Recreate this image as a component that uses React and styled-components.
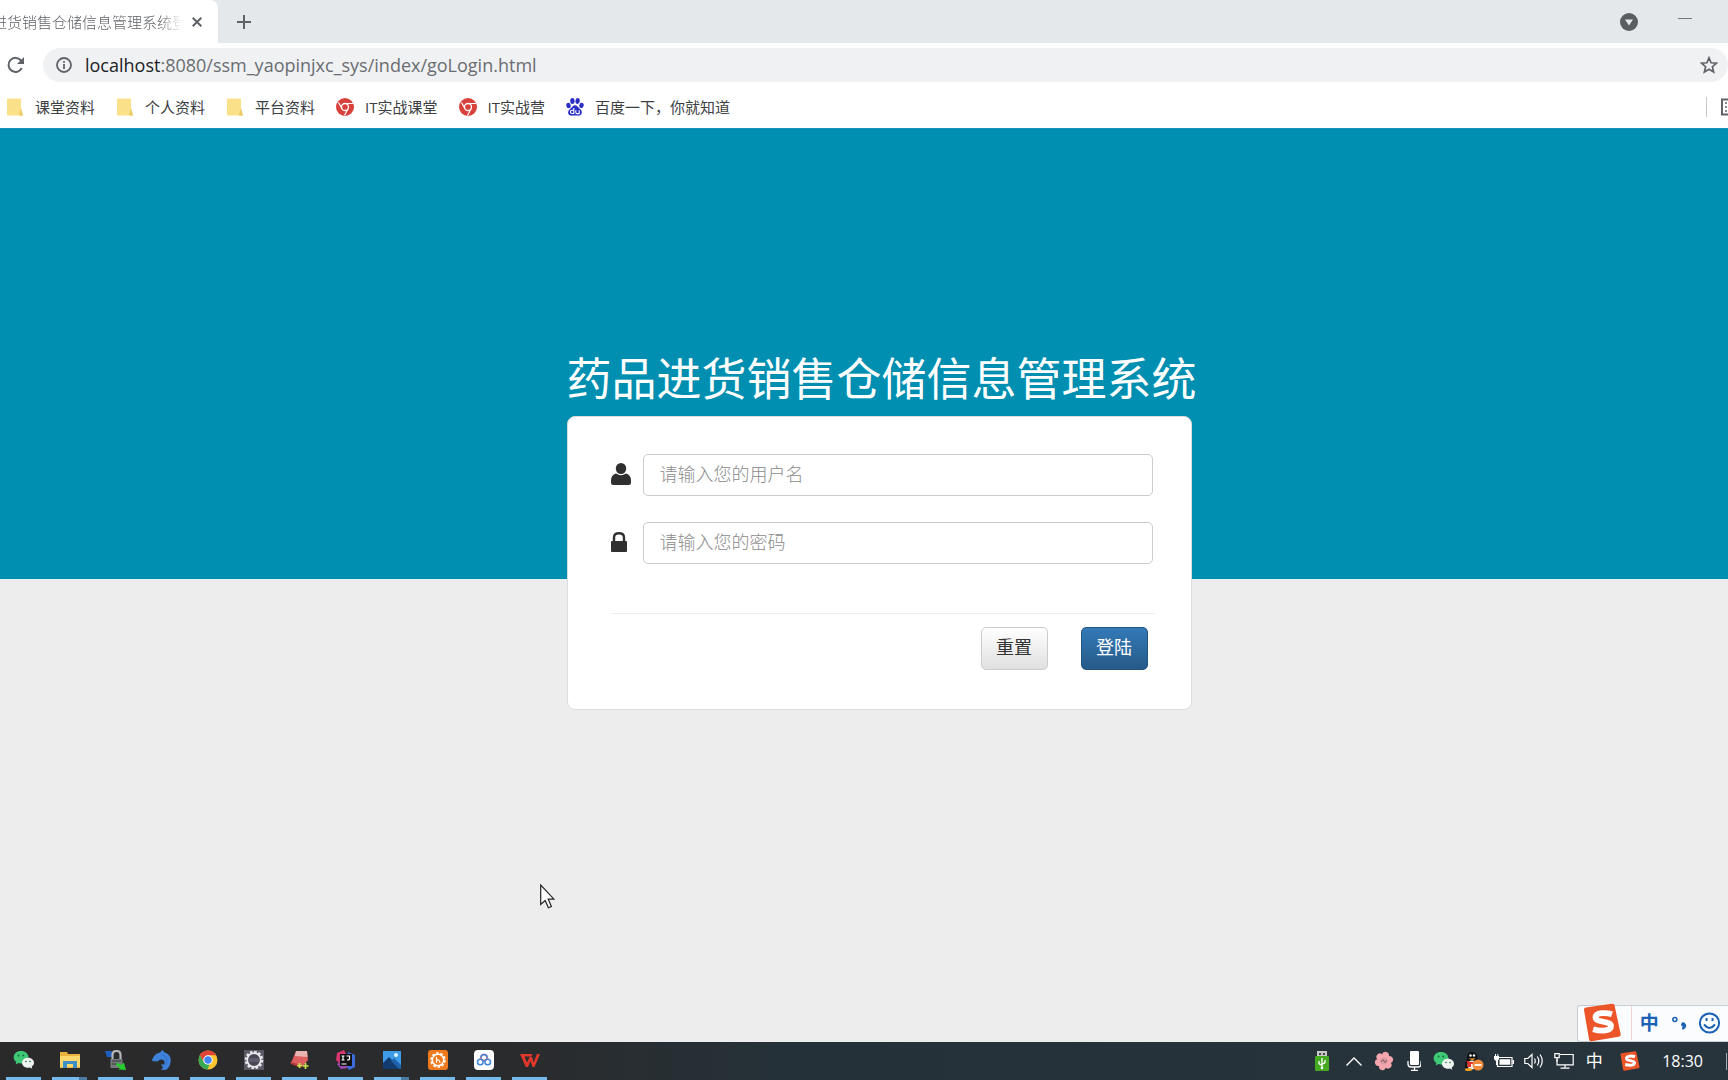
import React, { useState } from 'react';
import styled, { createGlobalStyle } from 'styled-components';

const GlobalStyle = createGlobalStyle`
  * {
    box-sizing: border-box;
  }

  body {
    margin: 0;
    font-family: "Open Sans", "Noto Sans CJK SC", sans-serif;
  }

  button, input {
    font-family: inherit;
  }
`;

/* ---------- browser ---------- */

const Screen = styled.div`
  position: relative;
  display: flex;
  flex-direction: column;
  min-height: 100vh;
  overflow: hidden;
`;

const TabStrip = styled.header`
  display: flex;
  align-items: center;
  height: 43px;
  background: #e5e8eb;
`;

const Tab = styled.div`
  display: flex;
  align-items: center;
  width: 218px;
  height: 43px;
  background: #fff;
  border-top-right-radius: 8px;
`;

const TabTitle = styled.span`
  width: 181px;
  overflow: hidden;
  white-space: nowrap;
  text-indent: -8px;
  font-size: 15px;
  line-height: 24px;
  color: #5f6266;
  font-weight: 300;
  mask-image: linear-gradient(to right, #000 160px, transparent 182px);
`;

const IconButton = styled.button`
  display: flex;
  align-items: center;
  justify-content: center;
  width: ${props => props.$width || 32}px;
  height: 32px;
  padding: 0;
  border: 0;
  background: none;
  color: #5f6368;
`;

const WindowButtons = styled.div`
  display: flex;
  gap: 24px;
  margin-left: auto;
  padding-right: 27px;
`;

const Toolbar = styled.div`
  display: flex;
  align-items: center;
  height: 44px;
  background: #fff;
`;

const AddressBar = styled.form`
  display: flex;
  flex: 1;
  align-items: center;
  height: 34px;
  margin-left: 11px;
  padding-left: 5px;
  background: #f0f1f3;
  border-radius: 17px;
`;

const Url = styled.p`
  flex: 1;
  margin: 0 0 0 5px;
  font-size: 18px;
  line-height: 32px;
  color: #6a6d71;

  & b {
    font-weight: 400;
    color: #202124;
  }
`;

const Bookmarks = styled.nav`
  display: flex;
  align-items: center;
  gap: 21px;
  height: 42px;
  padding: 0 0 2px 6px;
  background: #fff;
  border-bottom: 1px solid #1a90c0;
`;

const Bookmark = styled.a`
  display: flex;
  align-items: center;
  gap: 11px;
  color: #3c4043;
  font-size: 15px;
  line-height: 24px;
  text-decoration: none;
  white-space: nowrap;
`;

const ReadingList = styled.div`
  display: flex;
  align-items: center;
  height: 20px;
  margin-left: auto;
  padding-left: 14px;
  border-left: 1px solid #c5c8cc;
`;

/* ---------- login page ---------- */

const Page = styled.main`
  display: flex;
  flex: 1;
  flex-direction: column;
  align-items: center;
  padding: 218px 0 80px 30px;
  background: linear-gradient(to bottom, #008fb1 450px, #ededed 450px);
`;

const LoginBox = styled.div`
  width: 625px;
`;

const Title = styled.h1`
  margin: 0 0 5px;
  color: #fff;
  font-size: 45px;
  font-weight: 400;
  line-height: 64px;
  white-space: nowrap;
`;

const Card = styled.form`
  padding: 37px 36px 39px 43px;
  background: #fff;
  border: 1px solid #ddd;
  border-radius: 8px;
`;

const Field = styled.div`
  display: flex;
  align-items: center;
  margin-bottom: 26px;
  padding-right: 2px;

  & label {
    display: flex;
    width: 32px;
    padding-bottom: 3px;
  }

  & input {
    flex: 1;
    height: 42px;
    padding: 0 16px 2px;
    border: 1px solid #ccc;
    border-radius: 5px;
    color: #555;
    font-size: 18px;
    outline: 0;
  }

  & input::placeholder {
    color: #8c8c8c;
    font-weight: 300;
  }
`;

const Actions = styled.div`
  display: flex;
  gap: 33px;
  justify-content: flex-end;
  margin-top: 49px;
  padding: 13px 7px 0 0;
  border-top: 1px solid #eee;
`;

const Button = styled.button`
  width: 67px;
  height: 43px;
  padding: 0 0 3px;
  border: 1px solid ${props => (props.$primary ? '#245580' : '#ccc')};
  border-radius: 5px;
  background: ${props => (props.$primary
    ? 'linear-gradient(to bottom, #337ab7, #265a88)'
    : 'linear-gradient(to bottom, #fff, #e0e0e0)')};
  color: ${props => (props.$primary ? '#fff' : '#333')};
  font-size: 18px;
  line-height: 24px;
`;

/* ---------- desktop ---------- */

const Taskbar = styled.footer`
  display: flex;
  height: 38px;
  padding-left: 6px;
  background: linear-gradient(to right, #2a2a2b 0, #2a2b2d 30%, #253138 45%, #28343c);
`;

const Apps = styled.div`
  display: flex;
  gap: 11px;
`;

const AppButton = styled.button`
  display: flex;
  align-items: center;
  justify-content: center;
  width: 35px;
  padding: 0;
  border: 0;
  border-bottom: 3px solid #76b9ed;
  background: none;

  ${props => props.$stacked && `
    border-image: linear-gradient(to right, #76b9ed 25px, #4a7ba3 25px) 3;
  `}
`;

const Tray = styled.div`
  display: flex;
  align-items: center;
  margin-left: auto;
  color: #fff;
`;

const TrayItem = styled.span`
  display: flex;
  align-items: center;
  justify-content: center;
  width: ${props => props.$width || 30}px;
  font-size: 17px;
  line-height: 24px;
`;

const Clock = styled.time`
  margin: 0 23px 0 11px;
  font-size: 16px;
  line-height: 24px;
`;

const ShowDesktop = styled.span`
  width: 2px;
  height: 17px;
  border-left: 1px solid #a5abae;
`;

const ImeBar = styled.aside`
  position: absolute;
  right: 0;
  bottom: 38px;
  display: flex;
  align-items: center;
  width: 151px;
  height: 37px;
  padding: 0 0 2px 5px;
  background: #fafcfe;
  border: 1px solid #c9ced4;
  border-right: 0;
  border-radius: 3px 0 0 3px;
  color: #1c62b4;
`;

const ImeMode = styled.span`
  margin-left: 9px;
  padding-left: 8px;
  border-left: 1px solid #f0d5d5;
  font-size: 19px;
  font-weight: 700;
  line-height: 34px;
`;

const Pointer = styled.svg`
  position: absolute;
  left: 540px;
  top: 884px;
`;

/* ---------- drawings ---------- */

const Folder = () => (
  <svg width="18" height="18" viewBox="0 0 18 18">
    <path d="M1 1.500q0-1 1-1h12q1 0 1 1v11l2 5H2q-1 0-1-1z" fill="#fbe08a" />
    <path d="M15 10l2 7.500h-4z" fill="#ecc85e" />
  </svg>
);

const RedChrome = () => (
  <svg width="18" height="18" viewBox="0 0 18 18">
    <circle cx="9" cy="9" r="9" fill="#d8413c" />
    <circle cx="9" cy="9" r="3.500" fill="none" stroke="#fff" strokeWidth="1.300" />
    <path d="M9 5.500h8M6 10.800L2.500 4.500M12 10.800L8.500 17.500" stroke="#fff" strokeWidth="1.200" />
  </svg>
);

const Baidu = () => (
  <svg width="18" height="18" viewBox="0 0 18 18" fill="#2b2fc6">
    <ellipse cx="2.500" cy="7.500" rx="2.200" ry="2.700" transform="rotate(-12 2.500 7.500)" />
    <ellipse cx="6.400" cy="3" rx="2.200" ry="3" />
    <ellipse cx="11.600" cy="3" rx="2.200" ry="3" transform="rotate(8 11.600 3)" />
    <ellipse cx="15.500" cy="7.400" rx="2.200" ry="2.700" transform="rotate(12 15.500 7.400)" />
    <path d="M9 7.200c2.200 0 3 2 4.500 3.300 1.600 1.300 2.700 2.500 2.300 4.600-.4 2.200-2.300 2.800-4.100 2.500-1.800-.2-3.600-.2-5.400 0-2 .2-3.900-.3-4.200-2.500-.2-2 .9-3.200 2.500-4.500C6.200 9.300 6.800 7.200 9 7.200z" />
    <path d="M7.800 10v5.500H6q-1.500 0-1.500-1.600T6 12.300h1.800M9.800 12.200v2.200q0 1.200 1.200 1.200h2.200v-3.400" fill="none" stroke="#fff" strokeWidth="1.100" />
  </svg>
);

const WeChat = () => (
  <svg width="22" height="20" viewBox="0 0 22 20">
    <path d="M8 1C3.600 1 .7 3.700.7 7.200c0 2 1 3.600 2.600 4.800l-.7 2.500 2.900-1.400c.8.200 1.600.3 2.500.3 4.300 0 7.400-2.700 7.400-6.200S12.300 1 8 1z" fill="#3fc977" />
    <path d="M15 7.800c-3.400 0-6 2.200-6 5s2.600 5 6 5c.7 0 1.400-.1 2-.3l2.300 1.200-.6-2.100c1.400-.9 2.300-2.200 2.300-3.800 0-2.800-2.600-5-6-5z" fill="#eef3f0" />
    <g fill="#176b3c">
      <circle cx="5.500" cy="5.500" r="1" />
      <circle cx="10.300" cy="5.500" r="1" />
      <circle cx="13" cy="11.500" r=".8" />
      <circle cx="17" cy="11.500" r=".8" />
    </g>
  </svg>
);

const Explorer = () => (
  <svg width="20" height="20" viewBox="0 0 20 20">
    <path d="M0 2h7l1 2h12v14H0z" fill="#eab340" />
    <path d="M0 6h20v11H0z" fill="#fbd86e" />
    <path d="M3 18v-7h14v7h-4v-4H7v4z" fill="#3f8fc4" />
  </svg>
);

const RemoteLock = () => (
  <svg width="22" height="20" viewBox="0 0 22 20">
    <path d="M0 1h6l3 3-3 3H2z" fill="#1d5fbf" />
    <path d="M7.500 10V5q0-4 4-4t4 4v5" fill="none" stroke="#b4b7ba" strokeWidth="2.200" />
    <path d="M5.500 9h12v9h-12z" fill="#777a7d" />
    <path d="M7 11h9M7 14h7" stroke="#36393b" />
    <path d="M12 12.500l4 2.500 3-2.500L21 20l-7.500-.5 1.500-1.800-4-2.700z" fill="#25cc2c" />
  </svg>
);

const Dolphin = () => (
  <svg width="20" height="20" viewBox="0 0 20 20">
    <path d="M0 11C1 6.500 4 3.500 8 2.600L10.500 0l2 2.400c6 1.800 7.500 7 5.300 12.600-.8 2-2 3.500-3.500 4.700L9 20l2-2.200L9 14l3 .7c1.300-2.500.5-4.500-1.700-5.200-2.800-.4-3.500 1.500-5.300 2z" fill="#3f82dc" />
    <path d="M10 5c5 1 6 5 3.800 10" fill="none" stroke="#2f6dc5" />
  </svg>
);

const Chrome = () => (
  <svg width="20" height="20" viewBox="0 0 20 20">
    <circle cx="10" cy="10" r="9.500" fill="#fbc531" />
    <path d="M1.800 5.300A9.500 9.500 0 0 1 18.200 5.300H10L6 12.300z" fill="#e04436" />
    <path d="M1.800 5.300L6 12.400l5.500 2-2 5.100A9.500 9.500 0 0 1 1.800 5.300z" fill="#37a853" />
    <circle cx="10" cy="10" r="4.700" fill="#fff" />
    <circle cx="10" cy="10" r="3.700" fill="#4285f4" />
  </svg>
);

const Gear = () => (
  <svg width="20" height="20" viewBox="0 0 20 20">
    <path d="M0 0h20v20H0z" fill="#5b5965" />
    <circle cx="10" cy="10" r="8.300" fill="none" stroke="#e9e9ec" strokeWidth="2" strokeDasharray="2.600 1.740" />
    <circle cx="10" cy="10" r="6.800" fill="#4a4755" stroke="#e9e9ec" strokeWidth="1.800" />
    <path d="M5 9h10M5 11h10" stroke="#77738a" />
  </svg>
);

const RedBook = () => (
  <svg width="20" height="20" viewBox="0 0 20 20">
    <path d="M6 1h11l1 9-5 6-12-3z" fill="#dd5f5f" />
    <path d="M6 1h11l.5 6L5 6z" fill="#e9b5b0" />
    <path d="M0 12l12 3-1 3L1 14z" fill="#b3383b" />
    <path d="M9.500 13v5M7 15.500h5M15.500 13v6M12.500 16h6" stroke="#c8e552" strokeWidth="1.700" />
  </svg>
);

const Idea = () => (
  <svg width="20" height="20" viewBox="0 0 20 20">
    <path d="M1 3l7-3 4 8-8 6-4-4z" fill="#d9366f" />
    <path d="M12 2l7 3v12l-6 3-4-6z" fill="#3f6cdc" />
    <path d="M1 14l6-4 5 8-7 1z" fill="#9b4bb0" />
    <path d="M4 4h12v12H4z" fill="#111" />
    <path d="M5.500 6h3M7 6v4M5.500 10h3M10.500 6h3v3q0 1-2.500 1M5.500 14h5" fill="none" stroke="#fff" strokeWidth="1.200" />
  </svg>
);

const Photos = () => (
  <svg width="20" height="20" viewBox="0 0 20 20">
    <path d="M1 1h18v18H1z" fill="#3d9be8" />
    <path d="M1 13l6-6 12 12H1z" fill="#123c70" />
    <path d="M9 11l3-3 7 7v4h-2z" fill="#1d62aa" />
    <circle cx="14" cy="5" r="2" fill="#e1f2ff" />
  </svg>
);

const OrangeGear = () => (
  <svg width="20" height="20" viewBox="0 0 20 20">
    <rect width="20" height="20" rx="3" fill="#ef7a1e" />
    <circle cx="10" cy="10" r="7" fill="none" stroke="#fff" strokeWidth="1.600" strokeDasharray="2.700 1.700" />
    <circle cx="10" cy="10" r="5.700" fill="none" stroke="#fff" strokeWidth="1.400" />
    <path d="M8.500 7v6M8.500 10.500q3-2 3.500 2.500" fill="none" stroke="#fff" strokeWidth="1.200" />
  </svg>
);

const Cloud = () => (
  <svg width="20" height="20" viewBox="0 0 20 20">
    <rect width="20" height="20" rx="4" fill="#fdfdfe" />
    <g fill="none" strokeWidth="1.500">
      <circle cx="10" cy="7.500" r="3" stroke="#d45468" />
      <circle cx="6.300" cy="12" r="2.800" stroke="#3f86d8" />
      <circle cx="13.700" cy="12" r="2.800" stroke="#3f86d8" />
      <path d="M7 7.500a3 3 0 0 1 6 0" stroke="#3f86d8" />
    </g>
  </svg>
);

const Wps = () => (
  <svg width="20" height="20" viewBox="0 0 20 20">
    <path d="M0 4h12.500l-1 2.500H4.500L7 12.500 9.500 7h2.700l1.300 5.500L17 4h3l-5.500 13h-2L10.500 11 8 17H5.800z" fill="#e2382b" />
  </svg>
);

const Usb = () => (
  <svg width="14" height="20" viewBox="0 0 14 20">
    <path d="M2 0h10v6H2z" fill="#c7c9c9" />
    <path d="M4 2h2v2H4zM8 2h2v2H8z" fill="#444" />
    <rect y="5" width="14" height="15" rx="1" fill="#45a922" />
    <path d="M7 7v10M4 10v2q0 1.500 3 2M10 9v2q0 1.500-3 2" fill="none" stroke="#fff" strokeWidth="1.300" />
    <circle cx="7" cy="17" r="1.300" fill="#fff" />
  </svg>
);

const Flower = () => (
  <svg width="20" height="20" viewBox="0 0 20 20">
    <g fill="#f5a5ad">
      {[0, 60, 120, 180, 240, 300].map(deg => (
        <ellipse key={deg} cx="10" cy="5" rx="3.600" ry="4.300" transform={`rotate(${deg + 15} 10 10)`} />
      ))}
    </g>
    <circle cx="10" cy="10" r="3.500" fill="#d99a9f" />
    <path d="M7 11q2-4 3-1t3-1" fill="none" stroke="#7d5256" />
  </svg>
);

const Mic = () => (
  <svg width="14" height="20" viewBox="0 0 14 20">
    <rect x="3" width="9" height="14" rx="1" fill="#fff" />
    <path d="M1 10v3q0 3 3 3h7q3 0 3-3v-3M7.500 16v3M4 19.300h7" fill="none" stroke="#fff" strokeWidth="1.300" />
  </svg>
);

const Penguin = () => (
  <svg width="20" height="20" viewBox="0 0 20 20">
    <path d="M8 1c4 0 5.500 3 5.500 6 2 3 2.500 5 2 8-1 3-3 4-7.500 4s-7-1-7-4c0-3 1-5 2-7C3 4 4 1 8 1z" fill="#101113" />
    <ellipse cx="8" cy="14" rx="4.500" ry="4.500" fill="#f3f3f3" />
    <circle cx="6.500" cy="4.500" r="1.200" fill="#fff" />
    <circle cx="10" cy="4.500" r="1.200" fill="#fff" />
    <path d="M4.500 7.500h7.500l-3.500 1.800z" fill="#f7b11c" />
    <path d="M2.500 9.500q6 3 10.500 0v2.200q-3 1.300-6 1.300v3H3.500v-3.500z" fill="#e0312b" />
    <ellipse cx="4.500" cy="18.500" rx="3.500" ry="1.500" fill="#f0a21a" />
    <circle cx="14" cy="14" r="5.500" fill="#f08a3c" />
    <path d="M10.500 14h7" stroke="#fff" strokeWidth="1.800" />
  </svg>
);

const Battery = () => (
  <svg width="20" height="14" viewBox="0 0 20 14">
    <path d="M3.500 3.500h14.500v9H3.500z" fill="none" stroke="#fff" strokeWidth="1.200" />
    <path d="M5.500 5.300h10.800v5.400H5.500zM18.500 6H20v4h-1.500z" fill="#fff" />
    <path d="M0 2h5v3q-1 2-2.500 2T0 5zM1 0h1v2H1zM3.300 0h1v2h-1zM2 7h1v4H2z" fill="#fff" />
  </svg>
);

const Speaker = () => (
  <svg width="20" height="18" viewBox="0 0 20 18" fill="none" stroke="#fff" strokeWidth="1.200">
    <path d="M.8 6.500h3L8 2.500v13l-4.200-4h-3z" />
    <path d="M10.500 6.500q1.500 2.500 0 5M13.300 4.500q3 4.500 0 9M16 2.500q4.500 6.500 0 13" />
  </svg>
);

const Monitor = () => (
  <svg width="20" height="18" viewBox="0 0 20 18" fill="none" stroke="#fff" strokeWidth="1.200">
    <path d="M6 2.500h13.200v10.300H3V7M11 13v3M6.500 16.200h9" />
    <path d="M.8 1.600h4.400v4H.8zM3 5.600v4" />
  </svg>
);

const Sogou = ({ size }) => (
  <svg width={size} height={size} viewBox="0 0 40 40">
    <path d="M1 7q-.3-2 2-2.500L30 .5q2.300-.3 2.700 2L39 32q.4 2.200-2 2.700L9 39.500q-2.300.3-2.700-2z" fill="#ec5528" />
    <path d="M30 11.500c-6-2-17-2-17 3.300 0 5.300 16 3.500 16 8.700 0 5.500-10 6-18.500 3.500" fill="none" stroke="#fff" strokeWidth="6" />
  </svg>
);

const bookmarks = [
  { name: '课堂资料', Icon: Folder },
  { name: '个人资料', Icon: Folder },
  { name: '平台资料', Icon: Folder },
  { name: 'IT实战课堂', Icon: RedChrome },
  { name: 'IT实战营', Icon: RedChrome },
  { name: '百度一下，你就知道', Icon: Baidu },
];

const apps = [
  { name: 'WeChat', Icon: WeChat },
  { name: 'Explorer', Icon: Explorer, stacked: true },
  { name: 'Remote', Icon: RemoteLock },
  { name: 'Navicat', Icon: Dolphin },
  { name: 'Chrome', Icon: Chrome },
  { name: 'Eclipse', Icon: Gear },
  { name: 'Notes', Icon: RedBook },
  { name: 'IDEA', Icon: Idea },
  { name: 'Photos', Icon: Photos, stacked: true },
  { name: 'Recorder', Icon: OrangeGear },
  { name: 'Netdisk', Icon: Cloud },
  { name: 'WPS', Icon: Wps },
];

function Browser() {
  return (
    <>
      <TabStrip>
        <Tab>
          <TabTitle>进货销售仓储信息管理系统登</TabTitle>
          <IconButton aria-label="Close tab">
            <svg width="10" height="10" viewBox="0 0 10 10" stroke="currentColor" strokeWidth="2">
              <path d="M.7.7l8.600 8.600M9.300.7L.7 9.300" />
            </svg>
          </IconButton>
        </Tab>
        <IconButton aria-label="New tab" $width={52}>
          <svg width="14" height="14" viewBox="0 0 14 14" stroke="currentColor" strokeWidth="2">
            <path d="M7 0v14M0 7h14" />
          </svg>
        </IconButton>
        <WindowButtons>
          <IconButton aria-label="Search tabs">
            <svg width="18" height="18" viewBox="0 0 18 18">
              <circle cx="9" cy="9" r="9" fill="#5a5d61" />
              <path d="M5 6.500h8L9 12.500z" fill="#e5e8eb" />
            </svg>
          </IconButton>
          <IconButton aria-label="Minimize">
            <svg width="14" height="8" viewBox="0 0 14 8" stroke="#777">
              <path d="M0 .5h14" />
            </svg>
          </IconButton>
        </WindowButtons>
      </TabStrip>
      <Toolbar>
        <IconButton aria-label="Reload">
          <svg width="18" height="18" viewBox="0 0 18 18" fill="none" stroke="currentColor" strokeWidth="2">
            <path d="M14.800 12A7 7 0 1 1 14 4.500L16 7" />
            <path d="M17 1v7h-7z" fill="currentColor" stroke="none" />
          </svg>
        </IconButton>
        <AddressBar>
          <IconButton type="button" aria-label="Site information">
            <svg width="16" height="16" viewBox="0 0 16 16" fill="none" stroke="currentColor" strokeWidth="1.800">
              <circle cx="8" cy="8" r="7" />
              <path d="M8 7v5M8 4v1.800" />
            </svg>
          </IconButton>
          <Url><b>localhost</b>:8080/ssm_yaopinjxc_sys/index/goLogin.html</Url>
          <IconButton type="button" aria-label="Bookmark" $width={38}>
            <svg width="18" height="18" viewBox="0 0 18 18" fill="none" stroke="currentColor" strokeWidth="1.700">
              <path d="M9 1.800l2.100 5 5.300.4-4 3.500 1.200 5.300L9 13.200 4.400 16l1.200-5.300-4-3.500 5.300-.4z" />
            </svg>
          </IconButton>
        </AddressBar>
      </Toolbar>
      <Bookmarks>
        {bookmarks.map(({ name, Icon }) => (
          <Bookmark key={name} href="#"><Icon />{name}</Bookmark>
        ))}
        <ReadingList>
          <svg width="7" height="18" viewBox="0 0 7 18" fill="none" stroke="#5f6368" strokeWidth="2">
            <path d="M7 1.500H1v15h6" />
            <path d="M4 5h2M4 9h2M4 13h2" strokeWidth="1.500" />
          </svg>
        </ReadingList>
      </Bookmarks>
    </>
  );
}

function Login() {
  const [user, setUser] = useState('');
  const [password, setPassword] = useState('');

  return (
    <Page>
      <LoginBox>
        <Title>药品进货销售仓储信息管理系统</Title>
        <Card onSubmit={e => e.preventDefault()}>
          <Field>
            <label htmlFor="user" aria-label="用户名">
              <svg width="20" height="22" viewBox="0 0 20 22" fill="#2f2f2f">
                <ellipse cx="10" cy="5.500" rx="5.200" ry="5.500" />
                <path d="M5 10.500q5 3.500 10 0 5 1.500 5 7v2q0 2.500-2.500 2.500h-15Q0 22 0 19.500v-2q0-5.500 5-7z" />
              </svg>
            </label>
            <input id="user" value={user} onChange={e => setUser(e.target.value)} placeholder="请输入您的用户名" />
          </Field>
          <Field>
            <label htmlFor="password" aria-label="密码">
              <svg width="16" height="20" viewBox="0 0 16 20" fill="#2f2f2f">
                <path d="M3 10V5.500Q3 1.200 8 1.200t5 4.300V10" fill="none" stroke="#2f2f2f" strokeWidth="2.400" />
                <rect y="9" width="16" height="11" rx="1" />
              </svg>
            </label>
            <input
              id="password"
              type="password"
              value={password}
              onChange={e => setPassword(e.target.value)}
              placeholder="请输入您的密码"
            />
          </Field>
          <Actions>
            <Button type="reset" onClick={() => { setUser(''); setPassword(''); }}>重置</Button>
            <Button type="submit" $primary>登陆</Button>
          </Actions>
        </Card>
      </LoginBox>
    </Page>
  );
}

export default function App() {
  return (
    <Screen>
      <GlobalStyle />
      <Browser />
      <Login />
      <Taskbar>
        <Apps>
          {apps.map(({ name, Icon, stacked }) => (
            <AppButton key={name} aria-label={name} $stacked={stacked}><Icon /></AppButton>
          ))}
        </Apps>
        <Tray>
          <TrayItem $width={34}><Usb /></TrayItem>
          <TrayItem>
            <svg width="16" height="9" viewBox="0 0 16 9" fill="none" stroke="#fff" strokeWidth="1.400">
              <path d="M.5 8.500L8 1l7.500 7.500" />
            </svg>
          </TrayItem>
          <TrayItem><Flower /></TrayItem>
          <TrayItem><Mic /></TrayItem>
          <TrayItem><WeChat /></TrayItem>
          <TrayItem><Penguin /></TrayItem>
          <TrayItem><Battery /></TrayItem>
          <TrayItem><Speaker /></TrayItem>
          <TrayItem><Monitor /></TrayItem>
          <TrayItem>中</TrayItem>
          <TrayItem $width={42}><Sogou size={20} /></TrayItem>
          <Clock>18:30</Clock>
          <ShowDesktop />
        </Tray>
      </Taskbar>
      <ImeBar>
        <Sogou size={39} />
        <ImeMode>中</ImeMode>
        <svg width="70" height="34" viewBox="0 0 70 34" fill="none" stroke="currentColor" strokeWidth="2">
          <circle cx="16" cy="13.500" r="2" strokeWidth="1.600" />
          <path d="M26 18.500q1 3-2.500 4.500" strokeWidth="2.400" />
          <circle cx="24.500" cy="18.500" r="2.200" fill="currentColor" stroke="none" />
          <circle cx="51" cy="17" r="9.700" />
          <path d="M45.500 18.500q5.500 7 11 0M48 12v3M54 12v3" />
        </svg>
      </ImeBar>
      <Pointer width="15" height="25" viewBox="0 0 15 25">
        <path d="M.7 1v19.500l4.500-4 3.200 7.300 3-1.300-3.200-7.300H14z" fill="#fff" stroke="#222" strokeWidth="1.200" />
      </Pointer>
    </Screen>
  );
}
